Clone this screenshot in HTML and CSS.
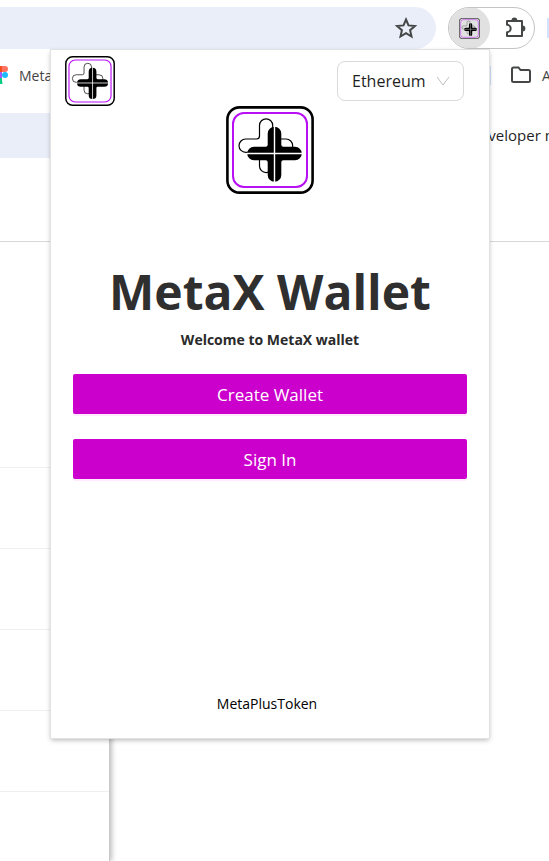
FILE: index.html
```
<!DOCTYPE html>
<html lang="en">

<head>
    <meta charset="UTF-8">
    <meta name="viewport" content="width=device-width, initial-scale=1.0">
    <title>MetaX Wallet</title>
    <link rel="stylesheet" href="styles.css">
</head>

<body>
    <!-- Logo shared by the popup and the toolbar icon -->
    <svg class="sprite" aria-hidden="true">
        <symbol id="logo" viewBox="0 0 88 88">
            <rect x="1.4" y="1.4" width="85.2" height="85.2" rx="12" fill="currentColor" stroke="#000" stroke-width="2.6" />
            <rect class="logo-ring" x="7" y="7" width="74" height="74" rx="11" fill="none" stroke="#b80ff5" />
            <path d="M30.5 33H19.7a6.7 6.7 0 0 0 0 13.4H33.5V60a6.6 6.6 0 0 0 13.2 0V46.4H60a6.7 6.7 0 0 0 0-13.4H46.7V19.4a6.6 6.6 0 0 0-13.2 0V30q0 3-3 3z" fill="none" stroke="#000" stroke-width="1.2" />
            <path d="M41.7 27.5a6.8 6.8 0 0 1 13.6 0V38.7q0 2 2 2H69a6.8 6.8 0 0 1 0 13.6H57.3q-2 0-2 2V69a6.8 6.8 0 0 1-13.6 0V56.3q0-2-2-2H28a6.8 6.8 0 0 1 0-13.6H39.7q2 0 2-2z" fill="#000" />
            <path d="M48.5 20V76.500M20.500 47.500H76.500" stroke="#fff" stroke-width="1.400" />
        </symbol>
    </svg>

    <div class="browser">
        <!-- Browser toolbar -->
        <div class="toolbar">
            <div class="address-bar">
                <svg class="star" viewBox="0 0 24 24" aria-hidden="true">
                    <path d="M12 3.500l2.500 5.900 6.400.6-4.800 4.200 1.400 6.300-5.500-3.300-5.500 3.300 1.400-6.300-4.800-4.200 6.400-.6z" />
                </svg>
            </div>
            <div class="extensions">
                <div class="ext-active">
                    <svg class="ext-logo" aria-hidden="true"><use href="#logo" /></svg>
                </div>
                <svg class="puzzle" viewBox="0 0 24 24" aria-hidden="true">
                    <path d="M4 5H19V20H4V16.200a3.400 3.400 0 0 0 0-7.400z" />
                    <path class="solid" d="M8.500 4.500a2.900 2.900 0 0 1 5.800 0zM19.500 9.600a2.900 2.900 0 0 1 0 5.800z" />
                </svg>
            </div>
            <div class="profile"></div>
        </div>

        <!-- Bookmarks bar -->
        <div class="bookmarks">
            <svg class="figma" viewBox="0 0 8 18" aria-hidden="true">
                <path d="M-4 0H2V6H-4z" fill="#f24e1e" />
                <path d="M2 0H5a3 3 0 0 1 0 6H2z" fill="#ff7262" />
                <path d="M-4 6H2V12H-4z" fill="#a259ff" />
                <circle cx="5" cy="9" r="3" fill="#1abcfe" />
                <path d="M-4 12H2V15a3 3 0 0 1-6 3z" fill="#0acf83" />
            </svg>
            <span class="bookmark">Meta</span>
            <div class="all-bookmarks">
                <span class="divider"></span>
                <svg class="folder" viewBox="0 0 22 18" aria-hidden="true">
                    <path d="M2 3q0-1.500 1.500-1.500H8.500L10.500 4H18.500Q20 4 20 5.500V14.500Q20 16 18.500 16H3.500Q2 16 2 14.500z" />
                </svg>
                <span>A</span>
            </div>
        </div>

        <!-- Extensions page behind the popup -->
        <div class="page-header">
            <div class="page-search"></div>
            <div class="dev-mode">Developer mode</div>
        </div>
        <div class="page-body">
            <ul class="sidebar">
                <li class="first"></li>
                <li></li>
                <li></li>
                <li></li>
                <li></li>
            </ul>
        </div>
    </div>

    <!-- Wallet popup -->
    <main class="popup">
        <div class="popup-header">
            <svg class="logo-small" role="img" aria-label="MetaX"><use href="#logo" /></svg>
            <div class="network">
                <select aria-label="Network">
                    <option>Ethereum</option>
                </select>
                <svg class="arrow" viewBox="0 0 14 10" aria-hidden="true">
                    <path d="M1 1L7 9L13 1" />
                </svg>
            </div>
        </div>
        <svg class="logo-big" role="img" aria-label="MetaX"><use href="#logo" /></svg>
        <h1>MetaX Wallet</h1>
        <h2>Welcome to MetaX wallet</h2>
        <div class="button-container">
            <button class="wallet-btn" type="button">Create Wallet</button>
            <button class="wallet-btn" type="button">Sign In</button>
        </div>
        <footer>MetaPlusToken</footer>
    </main>
</body>

</html>
```

FILE: styles.css
```
* {
    margin: 0;
    padding: 0;
    box-sizing: border-box;
}

body {
    position: relative;
    min-height: 100vh;
    overflow: hidden;
    font-family: 'Open Sans', 'Noto Sans', sans-serif;
    background-color: #fff;
    color: #1f1f1f;
}

svg {
    display: block;
    flex-shrink: 0;
    color: #fff;
}

.sprite {
    position: absolute;
    width: 0;
    height: 0;
}

.logo-ring {
    stroke-width: 2;
}

/* Browser */
.browser {
    display: flex;
    flex-direction: column;
    min-height: 100vh;
    overflow: hidden;
}

.toolbar {
    display: flex;
    align-items: center;
    gap: 12px;
    padding-top: 7px;
}

.address-bar {
    flex: 1;
    display: flex;
    align-items: center;
    justify-content: flex-end;
    height: 42px;
    padding-right: 18px;
    border-radius: 0 21px 21px 0;
    background-color: #eaeef8;
}

.star {
    width: 24px;
    height: 24px;
    fill: none;
    stroke: #444746;
    stroke-width: 2;
}

.extensions {
    display: flex;
    align-items: center;
    gap: 13px;
    width: 87px;
    height: 42px;
    border: 1px solid #c4c4c4;
    border-radius: 21px;
    overflow: hidden;
}

.ext-active {
    display: flex;
    align-items: center;
    justify-content: center;
    width: 41px;
    height: 42px;
    border-radius: 21px;
    background-color: #e1e1e1;
}

.ext-logo {
    width: 21px;
    height: 21px;
    color: #e1e1e1;
}

.puzzle {
    width: 24px;
    height: 24px;
    fill: none;
    stroke: #444746;
    stroke-width: 2;
    stroke-linejoin: round;
}

.puzzle .solid {
    fill: #444746;
    stroke: none;
}

.profile {
    width: 2px;
    height: 20px;
    background-color: #d3e3fd;
}

.bookmarks {
    display: flex;
    align-items: center;
    height: 52px;
    font-size: 14px;
    color: #444;
}

.figma {
    width: 8px;
    height: 18px;
}

.bookmark {
    margin-left: 11px;
}

.all-bookmarks {
    display: flex;
    align-items: center;
    width: 60px;
    margin-left: auto;
    overflow: hidden;
}

.all-bookmarks span {
    flex-shrink: 0;
}

.divider {
    width: 2px;
    height: 19px;
    margin-right: 19px;
    background-color: #d3e3fd;
}

.folder {
    width: 22px;
    height: 18px;
    margin-right: 10px;
    fill: none;
    stroke: #444746;
    stroke-width: 2;
}

.page-header {
    display: flex;
    align-items: center;
    height: 141px;
    padding: 12px 0 84px;
    border-bottom: 1px solid #d8d8d8;
}

.page-search {
    flex: 1;
    height: 45px;
    background-color: #eaeef8;
}

.dev-mode {
    width: 80px;
    white-space: nowrap;
    font-size: 15px;
}

.page-body {
    flex: 1;
    display: flex;
    overflow: hidden;
}

.sidebar {
    width: 110px;
    border-right: 1px solid #c8c8c8;
    box-shadow: 2px 0 5px rgba(0, 0, 0, 0.25);
    list-style: none;
}

.sidebar li {
    height: 81px;
    border-bottom: 1px solid #efefef;
}

.sidebar .first {
    height: 226px;
}

/* Popup */
.popup {
    position: absolute;
    top: 50px;
    left: 51px;
    right: 60px;
    display: flex;
    flex-direction: column;
    align-items: center;
    padding-bottom: 24px;
    background-color: #fff;
    box-shadow: 0 0 0 1px #e2e2e2, 0 2px 5px rgba(0, 0, 0, 0.3);
}

.popup-header {
    display: flex;
    align-items: center;
    justify-content: space-between;
    width: 100%;
    padding: 6px 25px 0 14px;
}

.logo-small {
    width: 50px;
    height: 50px;
}

.network {
    position: relative;
}

.network select {
    appearance: none;
    width: 127px;
    height: 40px;
    padding-left: 14px;
    border: 1px solid #d9d9d9;
    border-radius: 8px;
    background-color: #fff;
    color: #1f1f1f;
    font-family: inherit;
    font-size: 16px;
}

.network .arrow {
    position: absolute;
    top: 15px;
    right: 14px;
    width: 14px;
    height: 10px;
    fill: none;
    stroke: #bfbfbf;
    stroke-width: 1;
    pointer-events: none;
}

.logo-big {
    width: 88px;
    height: 88px;
}

h1 {
    margin-top: 66px;
    font-size: 48px;
    line-height: 64px;
    color: #2f2f2f;
}

h2 {
    margin-top: 6px;
    font-size: 14px;
    line-height: 20px;
    color: #2a2a2a;
}

.button-container {
    display: flex;
    flex-direction: column;
    gap: 25px;
    width: 100%;
    margin-top: 24px;
    padding: 0 22px;
}

.wallet-btn {
    height: 40px;
    border: none;
    border-radius: 2px;
    background-color: #cc00cc;
    box-shadow: 0 2px 0 rgba(255, 5, 230, 0.08);
    color: #fff;
    font-family: inherit;
    font-size: 17px;
    cursor: pointer;
}

.wallet-btn:hover {
    background-color: #b300b3;
}

footer {
    margin-top: 215px;
    padding-right: 6px;
    font-size: 14px;
    line-height: 20px;
    color: #000;
}
```
